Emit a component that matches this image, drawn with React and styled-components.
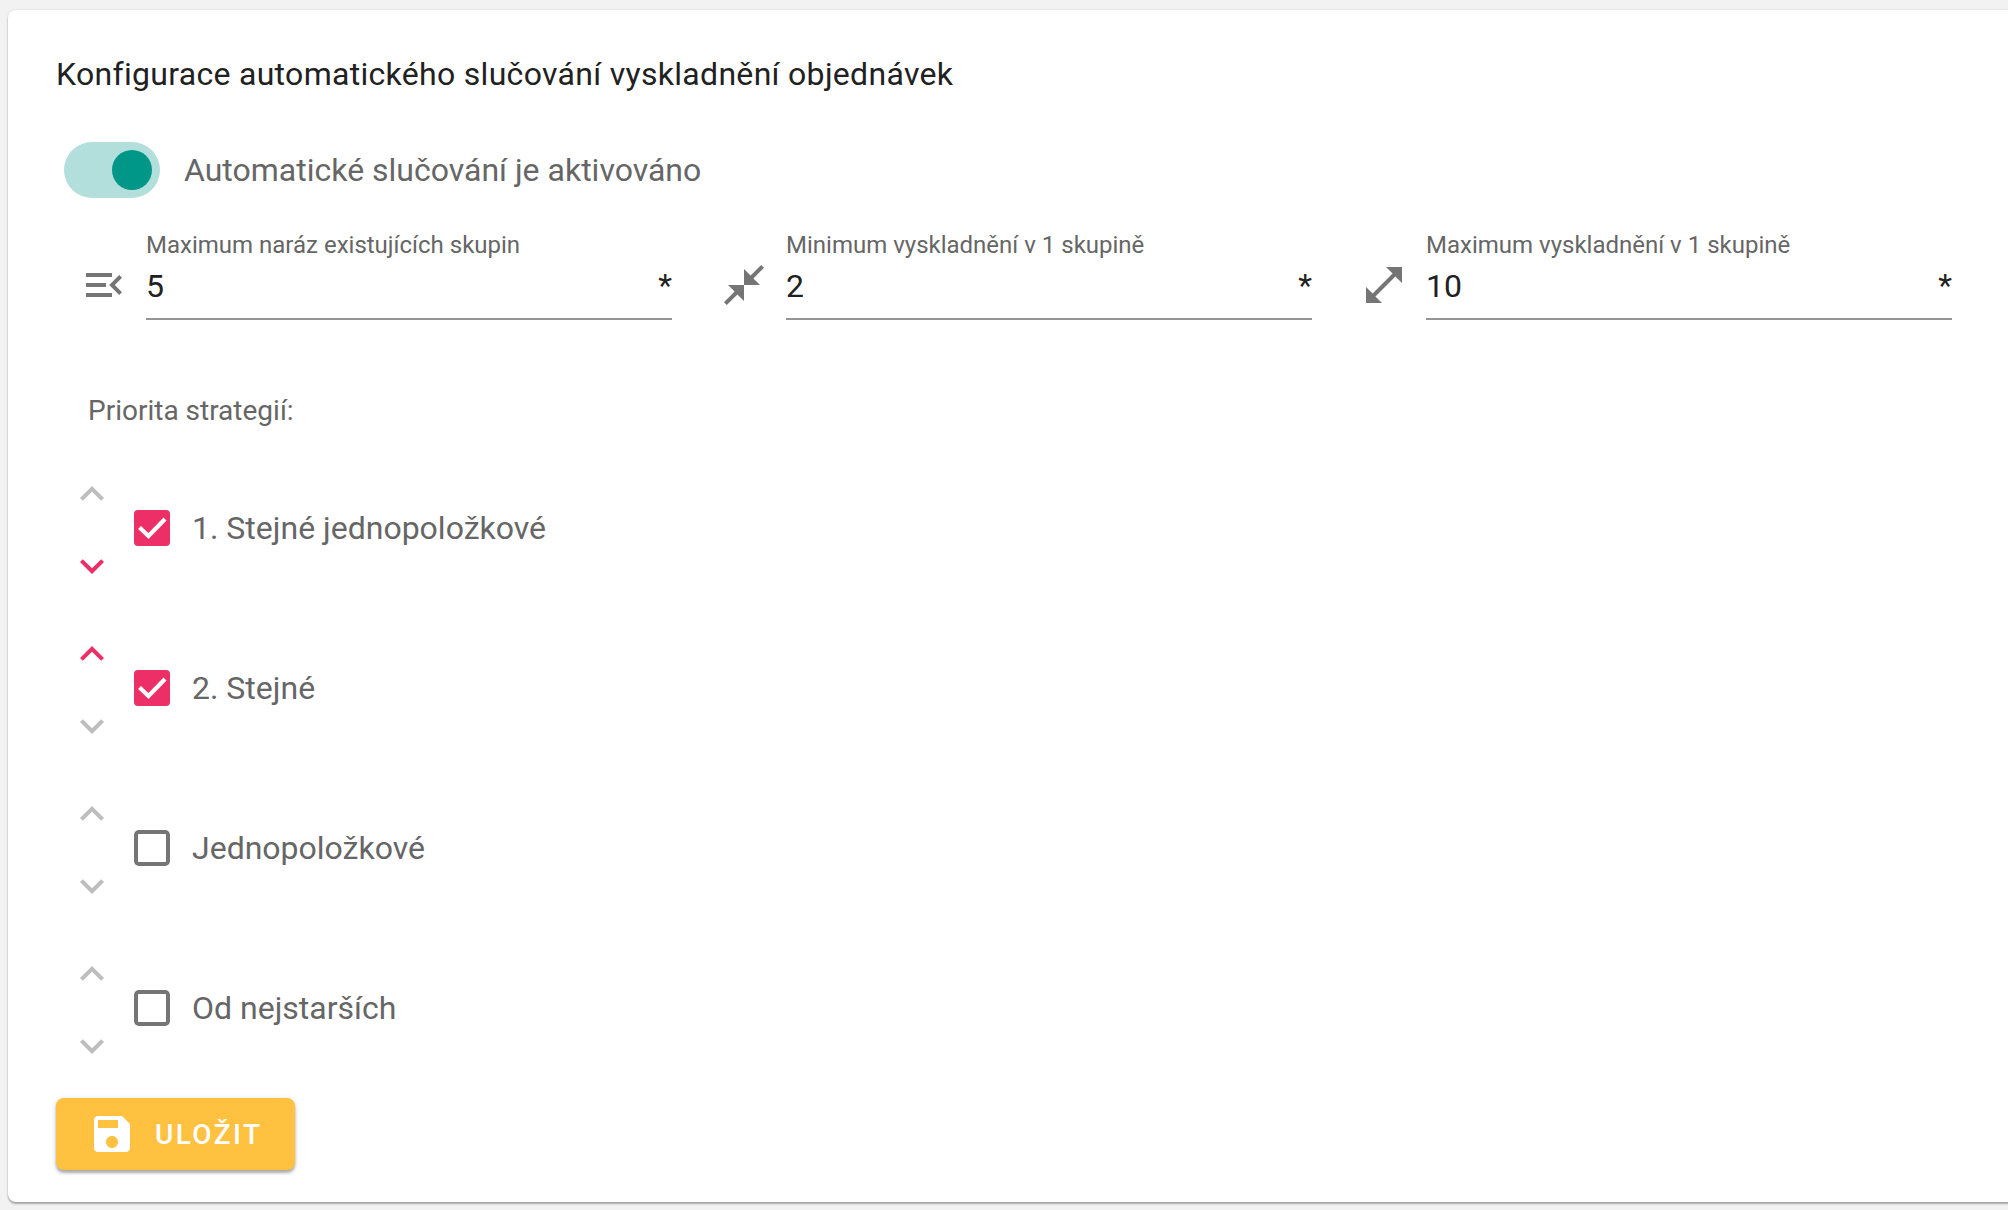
import React from 'react';
import styled, { createGlobalStyle } from 'styled-components';

const ICONS = {
  menuOpen: 'M3 18h13v-2H3v2zm0-5h10v-2H3v2zm0-7v2h13V6H3zm18 9.59L17.42 12 21 8.41 19.59 7l-5 5 5 5L21 15.59z',
  shrink: 'M22 3.41l-5.29 5.3L20 12h-8V4l3.29 3.29L20.59 2 22 3.41zM3.41 22l5.3-5.29L12 20v-8H4l3.29 3.29L2 20.59 3.41 22z',
  expand: 'M21 11V3h-8l3.29 3.29-10 10L3 13v8h8l-3.29-3.29 10-10z',
  up: 'M7.41 15.41L12 10.83l4.59 4.58L18 14l-6-6-6 6z',
  down: 'M7.41 8.59L12 13.17l4.59-4.58L18 10l-6 6-6-6z',
  save: 'M17 3H5c-1.11 0-2 .9-2 2v14c0 1.1.89 2 2 2h14c1.1 0 2-.9 2-2V7l-4-4zm-5 16c-1.66 0-3-1.34-3-3s1.34-3 3-3 3 1.34 3 3-1.34 3-3 3zm3-10H5V5h10v4z',
};

const fields = [
  { icon: 'menuOpen', label: 'Maximum naráz existujících skupin', value: '5' },
  { icon: 'shrink', label: 'Minimum vyskladnění v 1 skupině', value: '2' },
  { icon: 'expand', label: 'Maximum vyskladnění v 1 skupině', value: '10' },
];

const strategies = [
  { label: '1. Stejné jednopoložkové', checked: true, upActive: false, downActive: true },
  { label: '2. Stejné', checked: true, upActive: true, downActive: false },
  { label: 'Jednopoložkové', checked: false, upActive: false, downActive: false },
  { label: 'Od nejstarších', checked: false, upActive: false, downActive: false },
];

function Icon({ name, className }) {
  return (
    <svg className={className} viewBox="0 0 24 24" width="48" height="48" fill="currentColor">
      <path d={ICONS[name]} />
    </svg>
  );
}

function Check({ checked }) {
  return (
    <CheckBox viewBox="0 0 36 36" width="36" height="36">
      {checked ? (
        <>
          <rect width="36" height="36" rx="4" fill="#ec2f66" />
          <path d="M5.5 17.5l9 8.5L31 9" fill="none" stroke="#fff" strokeWidth="4.2" />
        </>
      ) : (
        <rect x="2" y="2" width="32" height="32" rx="3" fill="none" stroke="#757575" strokeWidth="4" />
      )}
    </CheckBox>
  );
}

export default function App() {
  return (
    <>
      <GlobalStyle />
      <Card>
        <Title>Konfigurace automatického slučování vyskladnění objednávek</Title>
        <ToggleRow>
          <Track>
            <Thumb />
          </Track>
          <ToggleLabel>Automatické slučování je aktivováno</ToggleLabel>
        </ToggleRow>
        <Fields>
          {fields.map((field) => (
            <Field key={field.label}>
              <FieldIcon name={field.icon} />
              <FieldBody>
                <FieldLabel>{field.label}</FieldLabel>
                <FieldInput>
                  <span>{field.value}</span>
                  <Required>*</Required>
                </FieldInput>
              </FieldBody>
            </Field>
          ))}
        </Fields>
        <SectionLabel>Priorita strategií:</SectionLabel>
        <Strategies>
          {strategies.map((item) => (
            <Strategy key={item.label}>
              <Arrows>
                <Arrow name="up" $active={item.upActive} />
                <Arrow name="down" $active={item.downActive} />
              </Arrows>
              <Check checked={item.checked} />
              <StrategyLabel>{item.label}</StrategyLabel>
            </Strategy>
          ))}
        </Strategies>
        <SaveButton>
          <Icon name="save" />
          <span>ULOŽIT</span>
        </SaveButton>
      </Card>
    </>
  );
}

const GlobalStyle = createGlobalStyle`
  html, body {
    margin: 0;
    height: 100%;
    overflow: hidden;
    background: #f2f2f2;
    font-family: Roboto, "Liberation Sans", sans-serif;
  }
`;

const Card = styled.div`
  box-sizing: border-box;
  width: 2016px;
  height: 1192px;
  margin: 10px 0 0 8px;
  padding: 48px 48px 0;
  background: #fff;
  border-radius: 8px;
  box-shadow: 0 2px 2px rgba(0, 0, 0, 0.3), 0 0 3px rgba(0, 0, 0, 0.08);
`;

const Title = styled.h1`
  margin: 0;
  font-size: 32px;
  font-weight: 400;
  line-height: 32px;
  letter-spacing: 0.3px;
  color: #212121;
`;

const ToggleRow = styled.div`
  display: flex;
  align-items: center;
  gap: 24px;
  margin: 52px 0 0 8px;
`;

const Track = styled.div`
  display: flex;
  align-items: center;
  justify-content: flex-end;
  width: 96px;
  height: 56px;
  padding-right: 8px;
  box-sizing: border-box;
  border-radius: 28px;
  background: #b2dfdb;
`;

const Thumb = styled.div`
  width: 40px;
  height: 40px;
  border-radius: 50%;
  background: #009688;
`;

const ToggleLabel = styled.div`
  font-size: 32px;
  color: #666;
`;

const Fields = styled.div`
  display: flex;
  margin: 33px 0 0 24px;
`;

const Field = styled.div`
  display: flex;
  flex: none;
  align-items: flex-end;
  gap: 18px;
  width: 640px;
`;

const FieldIcon = styled(Icon)`
  flex: none;
  margin-bottom: 11px;
  color: #757575;
`;

const FieldBody = styled.div`
  width: 526px;
`;

const FieldLabel = styled.div`
  font-size: 24px;
  line-height: 28px;
  color: #666;
`;

const FieldInput = styled.div`
  display: flex;
  justify-content: space-between;
  height: 56px;
  margin-top: 3px;
  border-bottom: 2px solid #949494;
  font-size: 32px;
  line-height: 48px;
  color: #212121;
`;

const Required = styled.span`
  font-size: 32px;
  line-height: 46px;
  color: #212121;
`;

const SectionLabel = styled.div`
  margin: 75px 0 0 32px;
  font-size: 28px;
  line-height: 32px;
  color: #666;
`;

const Strategies = styled.div`
  display: flex;
  flex-direction: column;
  gap: 40px;
  margin: 41px 0 0 12px;
`;

const Strategy = styled.div`
  display: flex;
  align-items: center;
  height: 120px;
`;

const Arrows = styled.div`
  display: flex;
  flex-direction: column;
  gap: 24px;
  margin: 4px 18px 0 0;
`;

const Arrow = styled(Icon)`
  display: block;
  color: ${(props) => (props.$active ? '#ec2f66' : '#bdbdbd')};
`;

const CheckBox = styled.svg`
  flex: none;
`;

const StrategyLabel = styled.div`
  margin-left: 22px;
  font-size: 32px;
  color: #666;
`;

const SaveButton = styled.button`
  display: flex;
  align-items: center;
  gap: 19px;
  box-sizing: border-box;
  width: 239px;
  height: 72px;
  margin-top: 30px;
  padding: 0 0 0 32px;
  border: 0;
  border-radius: 8px;
  background: #ffc13f;
  box-shadow: 0 3px 3px rgba(0, 0, 0, 0.28), 0 1px 6px rgba(0, 0, 0, 0.12);
  color: #fff;
  font-family: Roboto, sans-serif;
  font-size: 28px;
  font-weight: 500;
  letter-spacing: 2.4px;
`;
